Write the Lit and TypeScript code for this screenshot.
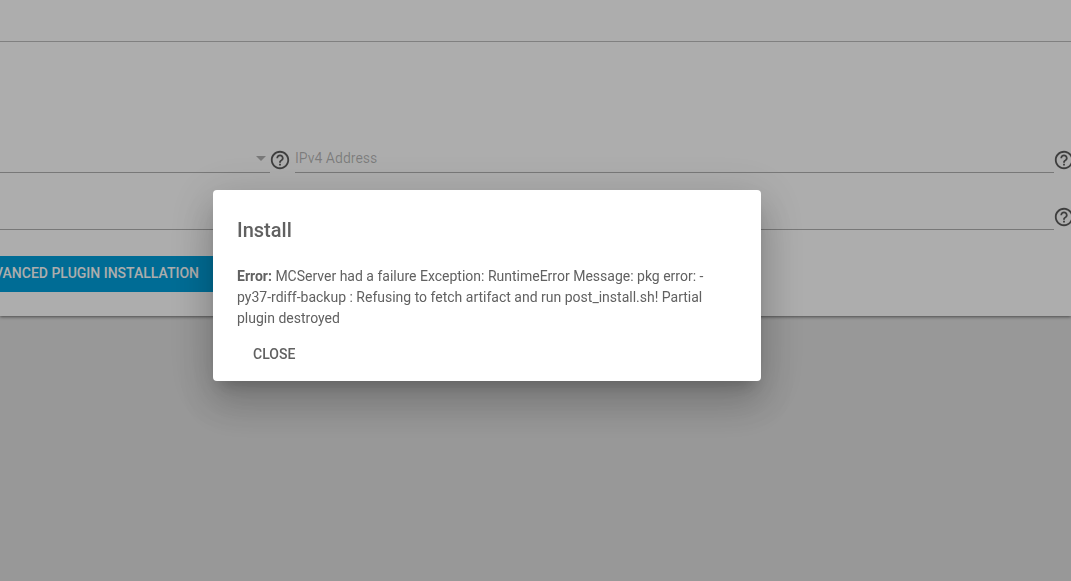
import { LitElement, html, css } from "lit";
import { customElement } from "lit/decorators.js";

const help = html`<svg class="help" viewBox="0 0 24 24"><path d="M11 18h2v-2h-2v2zm1-16C6.48 2 2 6.48 2 12s4.48 10 10 10 10-4.48 10-10S17.52 2 12 2zm0 18c-4.41 0-8-3.59-8-8s3.59-8 8-8 8 3.59 8 8-3.59 8-8 8zm0-14c-2.21 0-4 1.79-4 4h2c0-1.1.9-2 2-2s2 .9 2 2c0 2-3 1.75-3 5h2c0-2.25 3-2.5 3-5 0-2.21-1.79-4-4-4z"/></svg>`;

@customElement("app-root")
export class AppRoot extends LitElement {
  static styles = css`
    :host { display: block; font-family: Roboto, "Liberation Sans", sans-serif; }
    .page { height: 581px; background: #e0e0e0; overflow: hidden; }
    .card { height: 316px; background: #fff; box-shadow: 0 1px 3px rgba(0,0,0,.5); overflow: hidden; display: flex; flex-direction: column; }
    .head { height: 41px; flex: none; border-bottom: 1px solid rgba(0,0,0,.26); }
    .rows { display: flex; flex-direction: column; margin: 87px -8px 0 -200px; }
    .row { display: flex; height: 44px; align-items: flex-end; margin-bottom: 13px; }
    .field { border-bottom: 1px solid rgba(0,0,0,.3); display: flex; align-items: center; justify-content: flex-end; font-size: 14px; color: rgba(0,0,0,.28); padding-top: 2px; box-sizing: content-box; height: 28px; }
    .f1 { width: 470px; flex: none; }
    .f2 { flex: 1; justify-content: flex-start; }
    .arrow { width: 0; height: 0; border-left: 5.5px solid transparent; border-right: 5.5px solid transparent; border-top: 5.5px solid rgba(0,0,0,.3); margin-right: 4px; }
    .hslot { width: 25px; flex: none; height: 31px; display: flex; align-items: flex-end; }
    .help { width: 22px; height: 22px; fill: rgba(0,0,0,.64); display: block; margin: 0 0 2px -1px; flex: none; }
    .actions { margin: 13px 0 0 -200px; display: flex; }
    .adv { height: 36px; width: 415px; box-sizing: border-box; background: #00a0dc; color: #fff; border: 0; padding: 0 16px 2px; margin: 0; font: 500 14px/34px Roboto, "Liberation Sans", sans-serif; text-align: right; letter-spacing: 0; white-space: nowrap; }
    .overlay { position: fixed; inset: 0; background: rgba(0,0,0,.32); display: flex; }
    .dialog { position: absolute; left: 213px; top: 190px; width: 548px; height: 191px; box-sizing: border-box; background: #fff; border-radius: 4px; padding: 24px 24px 8px; color: #616161;
      box-shadow: 0 11px 15px -7px rgba(0,0,0,.2), 0 24px 38px 3px rgba(0,0,0,.14), 0 9px 46px 8px rgba(0,0,0,.12); display: flex; flex-direction: column; }
    h2 { margin: 0 0 20px; font: 500 20px/32px Roboto, "Liberation Sans", sans-serif; letter-spacing: 0; }
    p { margin: 0; font-size: 14px; line-height: 21px; }
    b { font-weight: 700; }
    .close { align-self: flex-start; margin-top: 7px; height: 36px; padding: 0 16px; background: none; border: 0; color: #616161; font: 500 14px/36px Roboto, "Liberation Sans", sans-serif; letter-spacing: 0; }
  `;
  render() {
    return html`
      <div class="page">
        <div class="card">
          <div class="head"></div>
          <div class="rows">
            <div class="row">
              <div class="field f1"><span class="arrow"></span></div>
              <div class="hslot">${help}</div>
              <div class="field f2">IPv4 Address</div>
              <div class="hslot">${help}</div>
            </div>
            <div class="row">
              <div class="field f1"></div>
              <div class="hslot"></div>
              <div class="field f2"></div>
              <div class="hslot">${help}</div>
            </div>
          </div>
          <div class="actions"><button class="adv">ADVANCED PLUGIN INSTALLATION</button></div>
        </div>
      </div>
      <div class="overlay">
        <div class="dialog">
          <h2>Install</h2>
          <p><b>Error:</b> MCServer had a failure Exception: RuntimeError Message: pkg error: -py37-rdiff-backup : Refusing to fetch artifact and run post_install.sh! Partial plugin destroyed</p>
          <button class="close">CLOSE</button>
        </div>
      </div>
    `;
  }
}
